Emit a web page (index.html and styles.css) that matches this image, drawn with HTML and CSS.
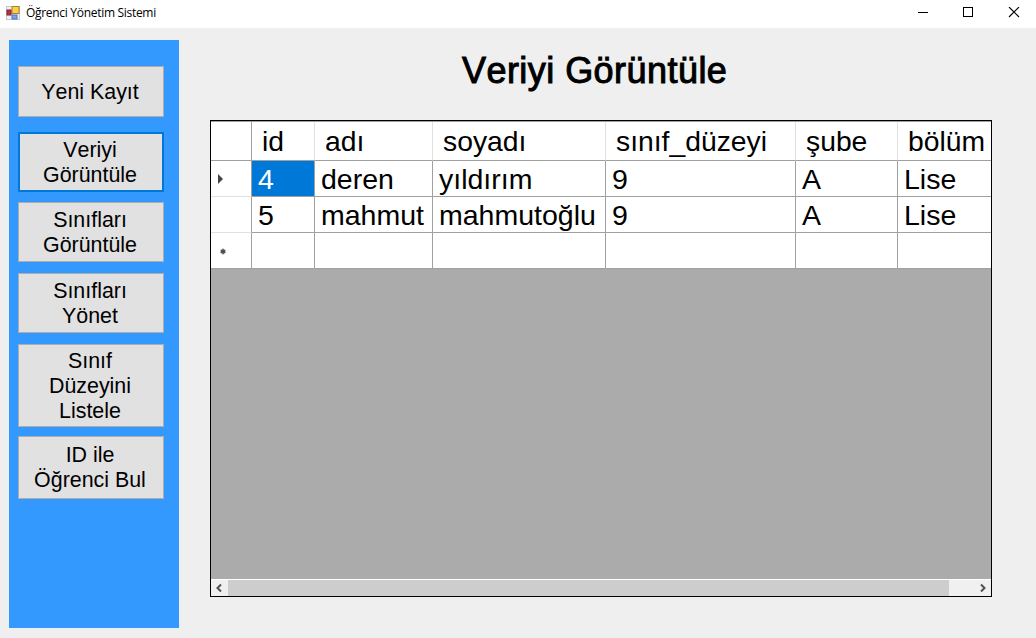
FILE: index.html
```html
<!DOCTYPE html>
<html lang="tr">
<head>
<meta charset="utf-8">
<title>Öğrenci Yönetim Sistemi</title>
<link rel="stylesheet" href="styles.css">
</head>
<body>
<header class="titlebar">
  <svg class="app-icon" width="14" height="14" viewBox="0 0 14 14">
    <rect x=".5" y=".5" width="13" height="13" fill="#eef0f4" stroke="#c4c8d0"/>
    <rect x="6" y=".5" width="7" height="7" fill="#f8cf4a" stroke="#a9812c"/>
    <rect x="1" y="4" width="4" height="5" fill="#c03038" stroke="#7c2228"/>
    <rect x="6" y="9" width="5" height="4" fill="#7aa4e8" stroke="#4a72bc"/>
  </svg>
  <span class="app-name">Öğrenci Yönetim Sistemi</span>
  <svg class="controls" width="104" height="11" viewBox="0 0 104 11" fill="none" stroke="#000" shape-rendering="crispEdges">
    <path d="M1 5.500h10"/>
    <rect x="46.500" y=".5" width="9" height="9"/>
    <path d="M92 0l10 10M102 0l-10 10" shape-rendering="auto" stroke-width="1.100"/>
  </svg>
</header>
<main class="window">
  <nav class="sidebar">
    <button class="nav-btn single">Yeni Kayıt</button>
    <button class="nav-btn focused">Veriyi<br>Görüntüle</button>
    <button class="nav-btn classes">Sınıfları<br>Görüntüle</button>
    <button class="nav-btn manage">Sınıfları<br>Yönet</button>
    <button class="nav-btn levels">Sınıf<br>Düzeyini<br>Listele</button>
    <button class="nav-btn find">ID ile<br>Öğrenci Bul</button>
  </nav>
  <section class="content">
    <h1 class="heading">Veriyi Görüntüle</h1>
    <div class="grid-view">
      <div class="row head">
        <span class="corner"></span><span>id</span><span>adı</span><span>soyadı</span><span>sınıf_düzeyi</span><span>şube</span><span>bölüm</span>
      </div>
      <div class="row">
        <span class="marker"><svg width="5" height="10" viewBox="0 0 5 10"><path d="M0 0l5 5-5 5z" fill="#444"/></svg></span><span class="selected">4</span><span>deren</span><span>yıldırım</span><span>9</span><span>A</span><span>Lise</span>
      </div>
      <div class="row">
        <span class="marker"></span><span>5</span><span>mahmut</span><span>mahmutoğlu</span><span>9</span><span>A</span><span>Lise</span>
      </div>
      <div class="row last">
        <span class="marker new"><svg width="6" height="7" viewBox="0 0 6 7"><path d="M3 .5v6M.5 2l5 3M5.500 2l-5 3" stroke="#777" stroke-width="1.200"/><circle cx="3" cy="3.500" r="2.300" fill="#505050"/></svg></span><span></span><span></span><span></span><span></span><span></span><span></span>
      </div>
      <div class="scrollbar">
        <svg width="17" height="16" viewBox="0 0 17 16"><path d="M10 4.500L6.500 8l3.500 3.500" fill="none" stroke="#505050" stroke-width="2"/></svg>
        <div class="thumb"></div>
        <svg width="17" height="16" viewBox="0 0 17 16"><path d="M7 4.500L10.500 8 7 11.500" fill="none" stroke="#505050" stroke-width="2"/></svg>
      </div>
    </div>
  </section>
</main>
</body>
</html>
```
FILE: styles.css
```css
* { box-sizing: border-box; }
body {
  margin: 0;
  width: 1036px;
  height: 638px;
  overflow: hidden;
  background: #efefef;
  color: #000;
  font-family: "Liberation Sans", sans-serif;
  font-kerning: none;
}
.titlebar {
  display: flex;
  align-items: center;
  height: 28px;
  padding: 0 15px 3px 6px;
  background: #fff;
}
.app-name {
  margin-left: 6px;
  font: 12px/16px "Open Sans", sans-serif;
  letter-spacing: -0.3px;
}
.controls { margin-left: auto; }
.window {
  display: flex;
  height: 610px;
  padding: 12px 44px 10px 9px;
}
.sidebar {
  display: flex;
  flex-direction: column;
  width: 170px;
  padding: 26px 15px 0 9px;
  background: #39f;
}
.nav-btn {
  flex: none;
  height: 60px;
  margin: 0 0 10px;
  padding: 2px 2px 0 0;
  border: 1px solid #adadad;
  background: #e1e1e1;
  color: #000;
  font: 21.4px/25px "Liberation Sans", sans-serif;
  font-kerning: none;
}
.nav-btn.single { height: 51px; margin-bottom: 15px; }
.nav-btn.focused { border: 2px solid #0078d7; }
.nav-btn.classes, .nav-btn.manage { margin-bottom: 11px; }
.nav-btn.levels { height: 83px; margin-bottom: 9px; }
.nav-btn.find { height: 63px; padding-top: 0; }
.content {
  display: flex;
  flex-direction: column;
  width: 782px;
  margin-left: 31px;
}
.heading {
  height: 80px;
  margin: 0;
  padding: 11px 0 0 252px;
  font-size: 36px;
  font-weight: 400;
  line-height: 40px;
  letter-spacing: 0.45px;
  white-space: nowrap;
  -webkit-text-stroke: 1px #000;
}
.grid-view {
  display: flex;
  flex-direction: column;
  height: 477px;
  overflow: hidden;
  border: 1px solid #000;
  background: #ababab;
}
.row {
  display: grid;
  grid-template-columns: 41px 63px 118px 173px 190px 102px 93px;
  grid-template-rows: 100%;
  flex: none;
  height: 36px;
  background: #fff;
  font-size: 28.5px;
  line-height: 37px;
}
.row span {
  padding-left: 6px;
  border-right: 1px solid #a0a0a0;
  border-bottom: 1px solid #a0a0a0;
  white-space: nowrap;
}
.row.head {
  height: 40px;
  border-top: 1px solid #a0a0a0;
  line-height: 38px;
  font-size: 28.3px;
}
.row.head span { padding-left: 10px; border-right-color: #e0e0e0; }
.row.head .corner { border-right-color: #a0a0a0; }
.row span:last-child { border-right: 0; }
.row .marker {
  display: flex;
  align-items: center;
  padding-left: 7px;
  border-bottom-color: #e0e0e0;
}
.row .marker.new { padding: 2px 0 0 9px; }
.row.last span { border-bottom-color: #a0a0a0; }
.row .selected { background: #0078d7; color: #fff; }
.scrollbar {
  display: flex;
  height: 17px;
  margin-top: auto;
  border-top: 1px solid #fff;
  background: #f0f0f0;
}
.scrollbar svg:last-child { margin-left: auto; }
.thumb { width: 721px; background: #cdcdcd; }
```
